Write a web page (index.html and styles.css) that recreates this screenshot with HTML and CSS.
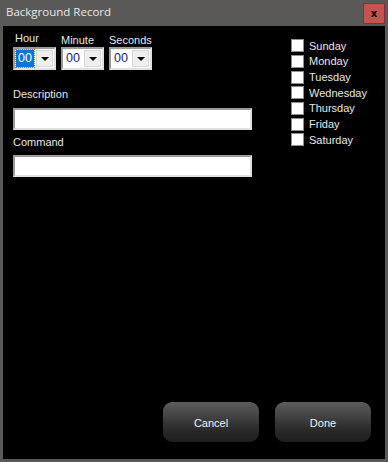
FILE: index.html
```html
<!DOCTYPE html>
<html>

<head>
    <title>Background Record</title>
    <link rel="stylesheet" href="styles.css">
</head>

<body>
    <div class="window">
        <div class="titlebar">
            <span class="title">Background Record</span>
            <button class="close">x</button>
        </div>

        <div class="content">
            <div class="top">
                <div class="left">
                    <div class="time-row">
                        <div class="field">
                            <label class="label hour-label">Hour</label>
                            <div class="select">
                                <span class="value selected">00</span>
                                <span class="arrow"></span>
                            </div>
                        </div>
                        <div class="field">
                            <label class="label">Minute</label>
                            <div class="select">
                                <span class="value">00</span>
                                <span class="arrow"></span>
                            </div>
                        </div>
                        <div class="field">
                            <label class="label">Seconds</label>
                            <div class="select">
                                <span class="value">00</span>
                                <span class="arrow"></span>
                            </div>
                        </div>
                    </div>

                    <label class="label desc-label">Description</label>
                    <input class="text-box desc-box" type="text">

                    <label class="label cmd-label">Command</label>
                    <input class="text-box" type="text">
                </div>

                <div class="days">
                    <label class="day"><span class="check"></span>Sunday</label>
                    <label class="day"><span class="check"></span>Monday</label>
                    <label class="day"><span class="check"></span>Tuesday</label>
                    <label class="day"><span class="check"></span>Wednesday</label>
                    <label class="day"><span class="check"></span>Thursday</label>
                    <label class="day"><span class="check"></span>Friday</label>
                    <label class="day"><span class="check"></span>Saturday</label>
                </div>
            </div>

            <div class="actions">
                <button class="btn">Cancel</button>
                <button class="btn">Done</button>
            </div>
        </div>
    </div>
</body>

</html>
```

FILE: styles.css
```css
body {
    margin: 0;
    background-color: #000000;
    font-family: "Liberation Sans", Arial, sans-serif;
}

.window {
    width: 388px;
    height: 462px;
    box-sizing: border-box;
    display: flex;
    flex-direction: column;
    background-color: #5a5957;
    padding: 0 3px 3px 3px;
}

.titlebar {
    height: 26px;
    display: flex;
    align-items: flex-start;
    justify-content: space-between;
}

.title {
    color: #e6e6e6;
    font-family: "Open Sans", "Noto Sans", sans-serif;
    font-size: 11.5px;
    padding-left: 3px;
    padding-top: 4px;
}

.close {
    width: 22px;
    height: 21px;
    margin-top: 3px;
    padding: 0;
    background-color: #c4544c;
    border: 1px solid #7a3431;
    color: #000000;
    font-family: "DejaVu Sans", sans-serif;
    font-size: 10px;
    font-weight: bold;
    line-height: 17px;
}

.content {
    flex: 1;
    display: flex;
    flex-direction: column;
    background-color: #000000;
    padding: 6px 14px 17px 10px;
}

.top {
    display: flex;
    gap: 39px;
}

.left {
    width: 239px;
    display: flex;
    flex-direction: column;
}

.label {
    display: block;
    color: #e8e8e8;
    font-size: 11px;
    line-height: 13px;
    white-space: nowrap;
}

.time-row {
    display: flex;
    gap: 5px;
}

.field {
    width: 43px;
    display: flex;
    flex-direction: column;
}

.field .label {
    margin-top: 2px;
}

.field .hour-label {
    margin-top: 0;
    margin-bottom: 2px;
    margin-left: 2px;
}

.select {
    width: 43px;
    height: 23px;
    box-sizing: border-box;
    display: flex;
    background-color: #ffffff;
    border: 2px solid;
    border-color: #9b9b9b #e0e0e0 #e0e0e0 #9b9b9b;
    padding: 1px;
}

.value {
    flex: 1;
    font-size: 12.5px;
    line-height: 17px;
    color: #1a1a6e;
    padding-left: 2px;
}

.value.selected {
    background-color: #0a74d8;
    color: #ffffff;
    outline: 1px dotted #e07000;
    margin-right: 2px;
}

.arrow {
    width: 17px;
    background-color: #eeeeee;
    border: 1px solid #d8d8d8;
    box-sizing: border-box;
    display: flex;
    align-items: center;
    justify-content: center;
}

.arrow::after {
    content: "";
    border-left: 4px solid transparent;
    border-right: 4px solid transparent;
    border-top: 4px solid #000000;
}

.desc-label {
    margin-top: 18px;
}

.cmd-label {
    margin-top: 6px;
}

.text-box {
    width: 239px;
    height: 22px;
    box-sizing: border-box;
    margin: 6px 0 0 0;
    background-color: #ffffff;
    border: 2px solid;
    border-color: #9b9b9b #e0e0e0 #e0e0e0 #9b9b9b;
    outline: none;
}

.desc-box {
    margin-top: 7px;
}

.days {
    display: flex;
    flex-direction: column;
    padding-top: 6px;
}

.day {
    display: flex;
    align-items: center;
    height: 15.67px;
    color: #e8e8e8;
    font-size: 11px;
}

.check {
    width: 13px;
    height: 13px;
    box-sizing: border-box;
    background-color: #ffffff;
    border: 1px solid #8e8e8e;
    margin-right: 5px;
}

.actions {
    margin-top: auto;
    display: flex;
    justify-content: flex-end;
    gap: 16px;
}

.btn {
    width: 96px;
    height: 40px;
    border: none;
    border-radius: 9px;
    padding-top: 3px;
    background: linear-gradient(#5c5c5c, #2a2a2a 70%, #1c1c1c);
    color: #f2f2f2;
    font-family: "Liberation Sans", Arial, sans-serif;
    font-size: 11px;
    cursor: pointer;
}
```
